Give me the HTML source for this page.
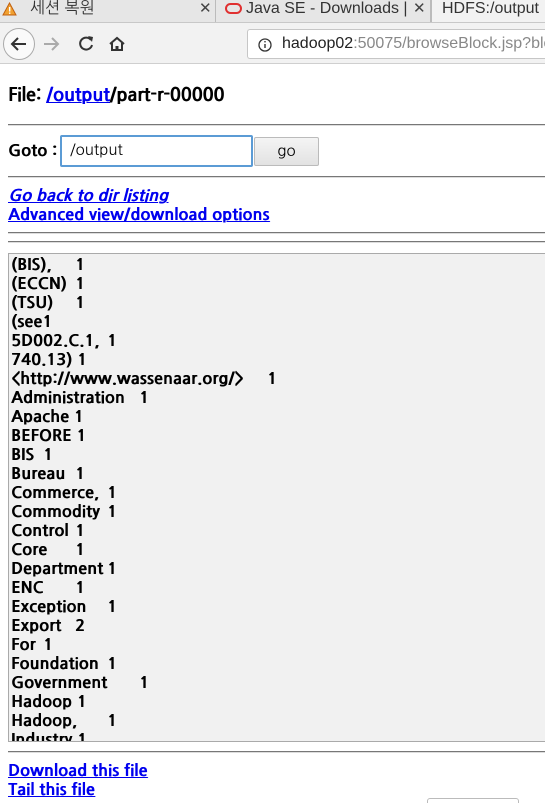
<!DOCTYPE html>
<html><head><meta charset="utf-8"><style>
*{margin:0;padding:0;box-sizing:border-box}
html,body{width:545px;height:803px;overflow:hidden}
body{background:#fff;font-family:"NanumGothic","Liberation Sans",sans-serif;position:relative}
.bb{font-weight:bold;text-shadow:0.6px 0 0 currentColor;letter-spacing:0.3px}
.tabs{position:absolute;left:0;top:0;width:545px;height:23px;background:#e6e6e6;border-bottom:1px solid #c8c8c8;overflow:hidden}
.tab{position:absolute;top:0;height:23px;font-family:"Liberation Sans","NanumGothic",sans-serif;font-size:16px;color:#333;line-height:17px}
.x{position:absolute;top:0;font-size:15px;color:#444}
.toolbar{position:absolute;left:0;top:23px;width:545px;height:41px;background:#f2f2f2;border-bottom:1px solid #cfcfcf;overflow:hidden}
.url{position:absolute;left:247px;top:6px;width:298px;height:30px;background:#fff;border:1px solid #c6c6c6;border-right:0;border-radius:3px 0 0 3px;font-family:"Liberation Sans",sans-serif;font-size:16px;line-height:28px;padding-left:34px;color:#222;white-space:nowrap;overflow:hidden}
a{color:#0000ee}
hr{position:absolute;left:8px;width:537px;border:0;border-top:1px solid #777;border-bottom:1px solid #ddd;height:0}
.lnk{position:absolute;left:8px;font-size:16px;line-height:19px;white-space:nowrap}
.ta{position:absolute;left:8px;top:253px;width:537px;height:489px;background:#f1f1f1;border:1px solid #aaa;border-right:0;overflow:hidden;padding:2px 0 0 2px;font-size:16px;line-height:19px;white-space:pre;tab-size:32px;-moz-tab-size:32px;color:#000}
</style></head><body>
<div class="tabs">
 <div class="tab" style="left:0;width:215px;padding-left:10px"><svg width="15" height="14" style="position:absolute;left:2px;top:2px"><path d="M7.5 1L14 13H1Z" fill="#f0a030" stroke="#c06010"/><rect x="7" y="5" width="1.4" height="4.5" fill="#fff"/><rect x="7" y="10.5" width="1.4" height="1.4" fill="#fff"/></svg><span style="margin-left:20px;font-family:'NanumGothic','Noto Sans CJK KR',sans-serif">세션 복원</span><span class="x" style="left:199px">✕</span></div>
 <div class="tab" style="left:215px;width:216px;border-left:1px solid #bbb;border-right:1px solid #bbb;overflow:hidden"><svg width="18" height="12" style="position:absolute;left:9px;top:3px"><rect x="1" y="1" width="15" height="9" rx="4.5" fill="none" stroke="#e03030" stroke-width="2"/></svg><span style="position:absolute;left:30px;white-space:nowrap">Java SE - Downloads | <span style="color:#aaa">Or</span></span><span class="x" style="left:193px;background:#e6e6e6;padding:0 4px">✕</span></div>
 <div class="tab" style="left:431px;width:114px;background:#f2f2f2;height:24px;padding-left:10px;border-left:1px solid #bbb;white-space:nowrap;overflow:hidden">HDFS:/output</div>
</div>
<div class="toolbar">
 <div style="position:absolute;left:3px;top:5px;width:32px;height:32px;border:1px solid #aaa;border-radius:50%;background:#fafafa"></div>
 <svg width="240" height="41" style="position:absolute;left:0;top:0">
  <path d="M26 21H12M18 15l-6 6 6 6" stroke="#333" stroke-width="2" fill="none"/>
  <path d="M58 21H44M52 15l6 6-6 6" stroke="#aaa" stroke-width="2" fill="none"/>
  <path d="M91 17a6 6 0 1 0 1 5" stroke="#333" stroke-width="2" fill="none"/><path d="M88 13l5 1-1 5z" fill="#333"/>
  <path d="M110 21l7-6 7 6M112 20v7h10v-7" stroke="#333" stroke-width="2" fill="none"/><rect x="115.5" y="23" width="3" height="4" fill="#333"/>
 </svg>
 <div class="url"><svg width="14" height="14" style="position:absolute;left:10px;top:8px"><circle cx="7" cy="7" r="6" stroke="#333" stroke-width="1.3" fill="none"/><rect x="6.3" y="6" width="1.4" height="4" fill="#333"/><rect x="6.3" y="3" width="1.4" height="1.4" fill="#333"/></svg>hadoop02<span style="color:#888">:50075/browseBlock.jsp?blockId</span></div>
</div>
<div class="bb" style="position:absolute;left:8px;top:84px;font-size:18px;line-height:22px;letter-spacing:0">File: <a href="#">/output</a>/part-r-00000</div>
<hr style="top:124px">
<div class="bb" style="position:absolute;left:8px;top:142px;font-size:16px;line-height:19px">Goto :</div>
<div style="position:absolute;left:60px;top:135px;width:193px;height:32px;border:2px solid #5b9bd5;border-radius:2px;font-size:15px;line-height:28px;padding-left:8px;font-family:'NanumGothic',sans-serif">/output</div>
<div style="position:absolute;left:254px;top:137px;width:65px;height:29px;border:1px solid #bbb;border-radius:2px;background:linear-gradient(#f4f4f4,#e2e2e2);text-align:center;font-size:15px;line-height:27px">go</div>
<hr style="top:176px">
<div class="lnk bb" style="top:187px"><a href="#" style="font-style:italic">Go back to dir listing</a></div>
<div class="lnk bb" style="top:206px"><a href="#">Advanced view/download options</a></div>
<hr style="top:232px">
<hr style="top:241px">
<div class="ta bb">(BIS),	1
(ECCN)	1
(TSU)	1
(see1
5D002.C.1,	1
740.13) 1
&lt;http://www.wassenaar.org/&gt;	1
Administration	1
Apache 1
BEFORE 1
BIS	1
Bureau	1
Commerce,	1
Commodity	1
Control	1
Core	1
Department	1
ENC	1
Exception	1
Export	2
For	1
Foundation	1
Government	1
Hadoop 1
Hadoop,	1
Industry 1</div>
<hr style="top:751px">
<div class="lnk bb" style="top:762px"><a href="#">Download this file</a></div>
<div class="lnk bb" style="top:781px"><a href="#">Tail this file</a></div>
<div style="position:absolute;left:427px;top:798px;width:92px;height:20px;border:1px solid #bbb;border-radius:3px"></div>
</body></html>
